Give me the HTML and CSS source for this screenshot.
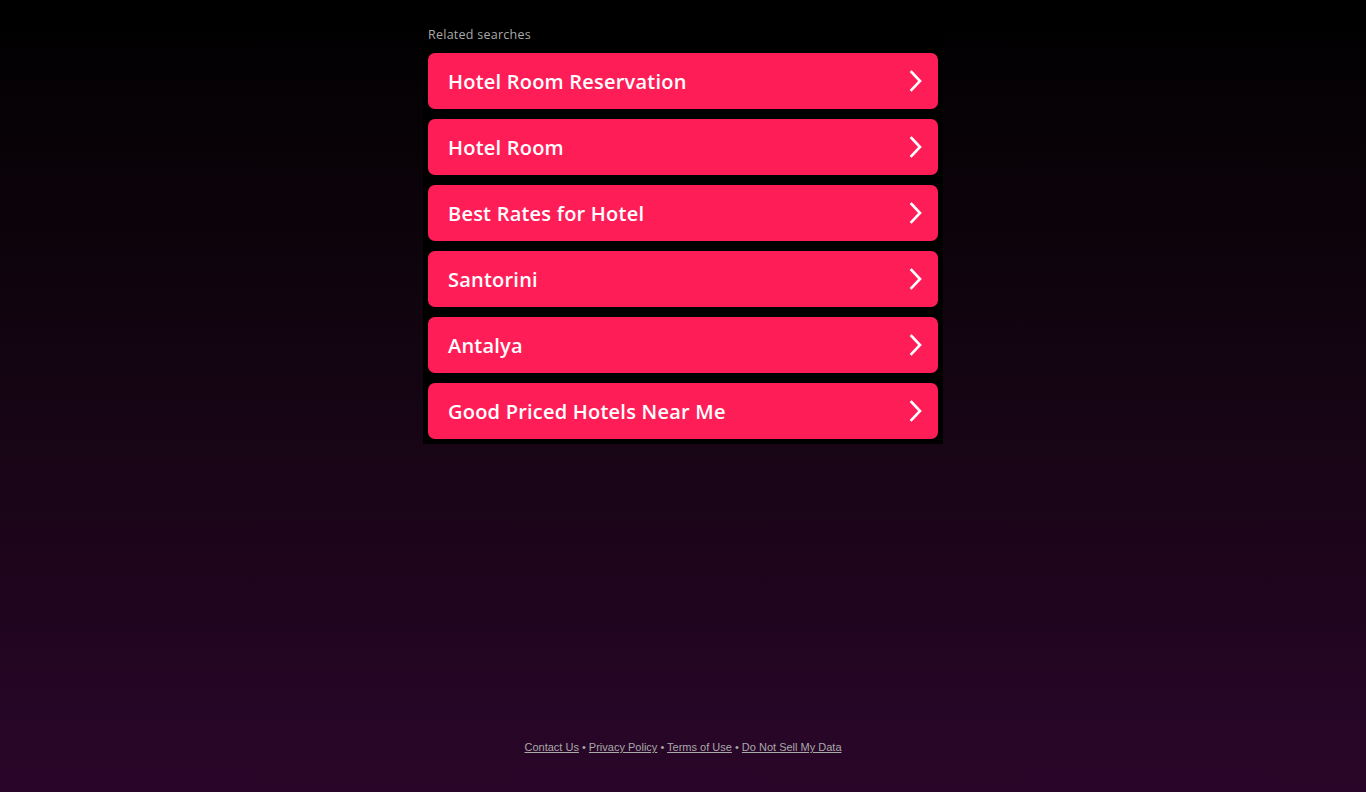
FILE: index.html
```html
<!DOCTYPE html>
<html lang="en">
<head>
<meta charset="utf-8">
<title>Related searches</title>
<link rel="stylesheet" href="styles.css">
</head>
<body>
<div class="page">
  <main class="panel">
    <div class="label">Related searches</div>
    <div class="list">
      <a class="card" href="#"><span class="card-text">Hotel Room Reservation</span><svg class="chev" viewBox="0 0 14 22" width="14" height="22"><polyline points="2.5,2 11,11 2.5,20" fill="none" stroke="#fff" stroke-width="2.6" stroke-linecap="square"/></svg></a>
      <a class="card" href="#"><span class="card-text">Hotel Room</span><svg class="chev" viewBox="0 0 14 22" width="14" height="22"><polyline points="2.5,2 11,11 2.5,20" fill="none" stroke="#fff" stroke-width="2.6" stroke-linecap="square"/></svg></a>
      <a class="card" href="#"><span class="card-text">Best Rates for Hotel</span><svg class="chev" viewBox="0 0 14 22" width="14" height="22"><polyline points="2.5,2 11,11 2.5,20" fill="none" stroke="#fff" stroke-width="2.6" stroke-linecap="square"/></svg></a>
      <a class="card" href="#"><span class="card-text">Santorini</span><svg class="chev" viewBox="0 0 14 22" width="14" height="22"><polyline points="2.5,2 11,11 2.5,20" fill="none" stroke="#fff" stroke-width="2.6" stroke-linecap="square"/></svg></a>
      <a class="card" href="#"><span class="card-text">Antalya</span><svg class="chev" viewBox="0 0 14 22" width="14" height="22"><polyline points="2.5,2 11,11 2.5,20" fill="none" stroke="#fff" stroke-width="2.6" stroke-linecap="square"/></svg></a>
      <a class="card" href="#"><span class="card-text">Good Priced Hotels Near Me</span><svg class="chev" viewBox="0 0 14 22" width="14" height="22"><polyline points="2.5,2 11,11 2.5,20" fill="none" stroke="#fff" stroke-width="2.6" stroke-linecap="square"/></svg></a>
    </div>
  </main>
  <footer class="footer">
    <a href="#">Contact Us</a> &bull; <a href="#">Privacy Policy</a> &bull; <a href="#">Terms of Use</a> &bull; <a href="#">Do Not Sell My Data</a>
  </footer>
</div>
</body>
</html>
```
FILE: styles.css
```css
html, body {
  margin: 0;
  padding: 0;
}
body {
  background: linear-gradient(to bottom, #000000 0%, #0f040d 35%, #1b0519 65%, #2a062a 100%);
  min-height: 792px;
  font-family: "Open Sans", "Liberation Sans", sans-serif;
}
.page {
  min-height: 792px;
  display: flex;
  flex-direction: column;
  align-items: center;
}
.panel {
  width: 510px;
  background: #000;
  padding: 27px 5px 5px;
}
.label {
  color: #a9a9a9;
  font-size: 12.5px;
  line-height: 16px;
  letter-spacing: 0.25px;
  margin-bottom: 10px;
}
.list {
  display: flex;
  flex-direction: column;
  gap: 10px;
}
.card {
  display: flex;
  align-items: center;
  justify-content: space-between;
  height: 56px;
  padding: 0 15px 0 20px;
  background: #ff1d58;
  border-radius: 7px;
  color: #fff;
  text-decoration: none;
}
.card-text {
  font-size: 20px;
  font-weight: 600;
  letter-spacing: 0.22px;
}
.chev {
  display: block;
}
.footer {
  margin-top: auto;
  padding-bottom: 39px;
  font-family: "Liberation Sans", Arial, sans-serif;
  font-size: 11px;
  color: #a9a9a9;
}
.footer a {
  color: #a9a9a9;
  text-decoration: underline;
}
```
